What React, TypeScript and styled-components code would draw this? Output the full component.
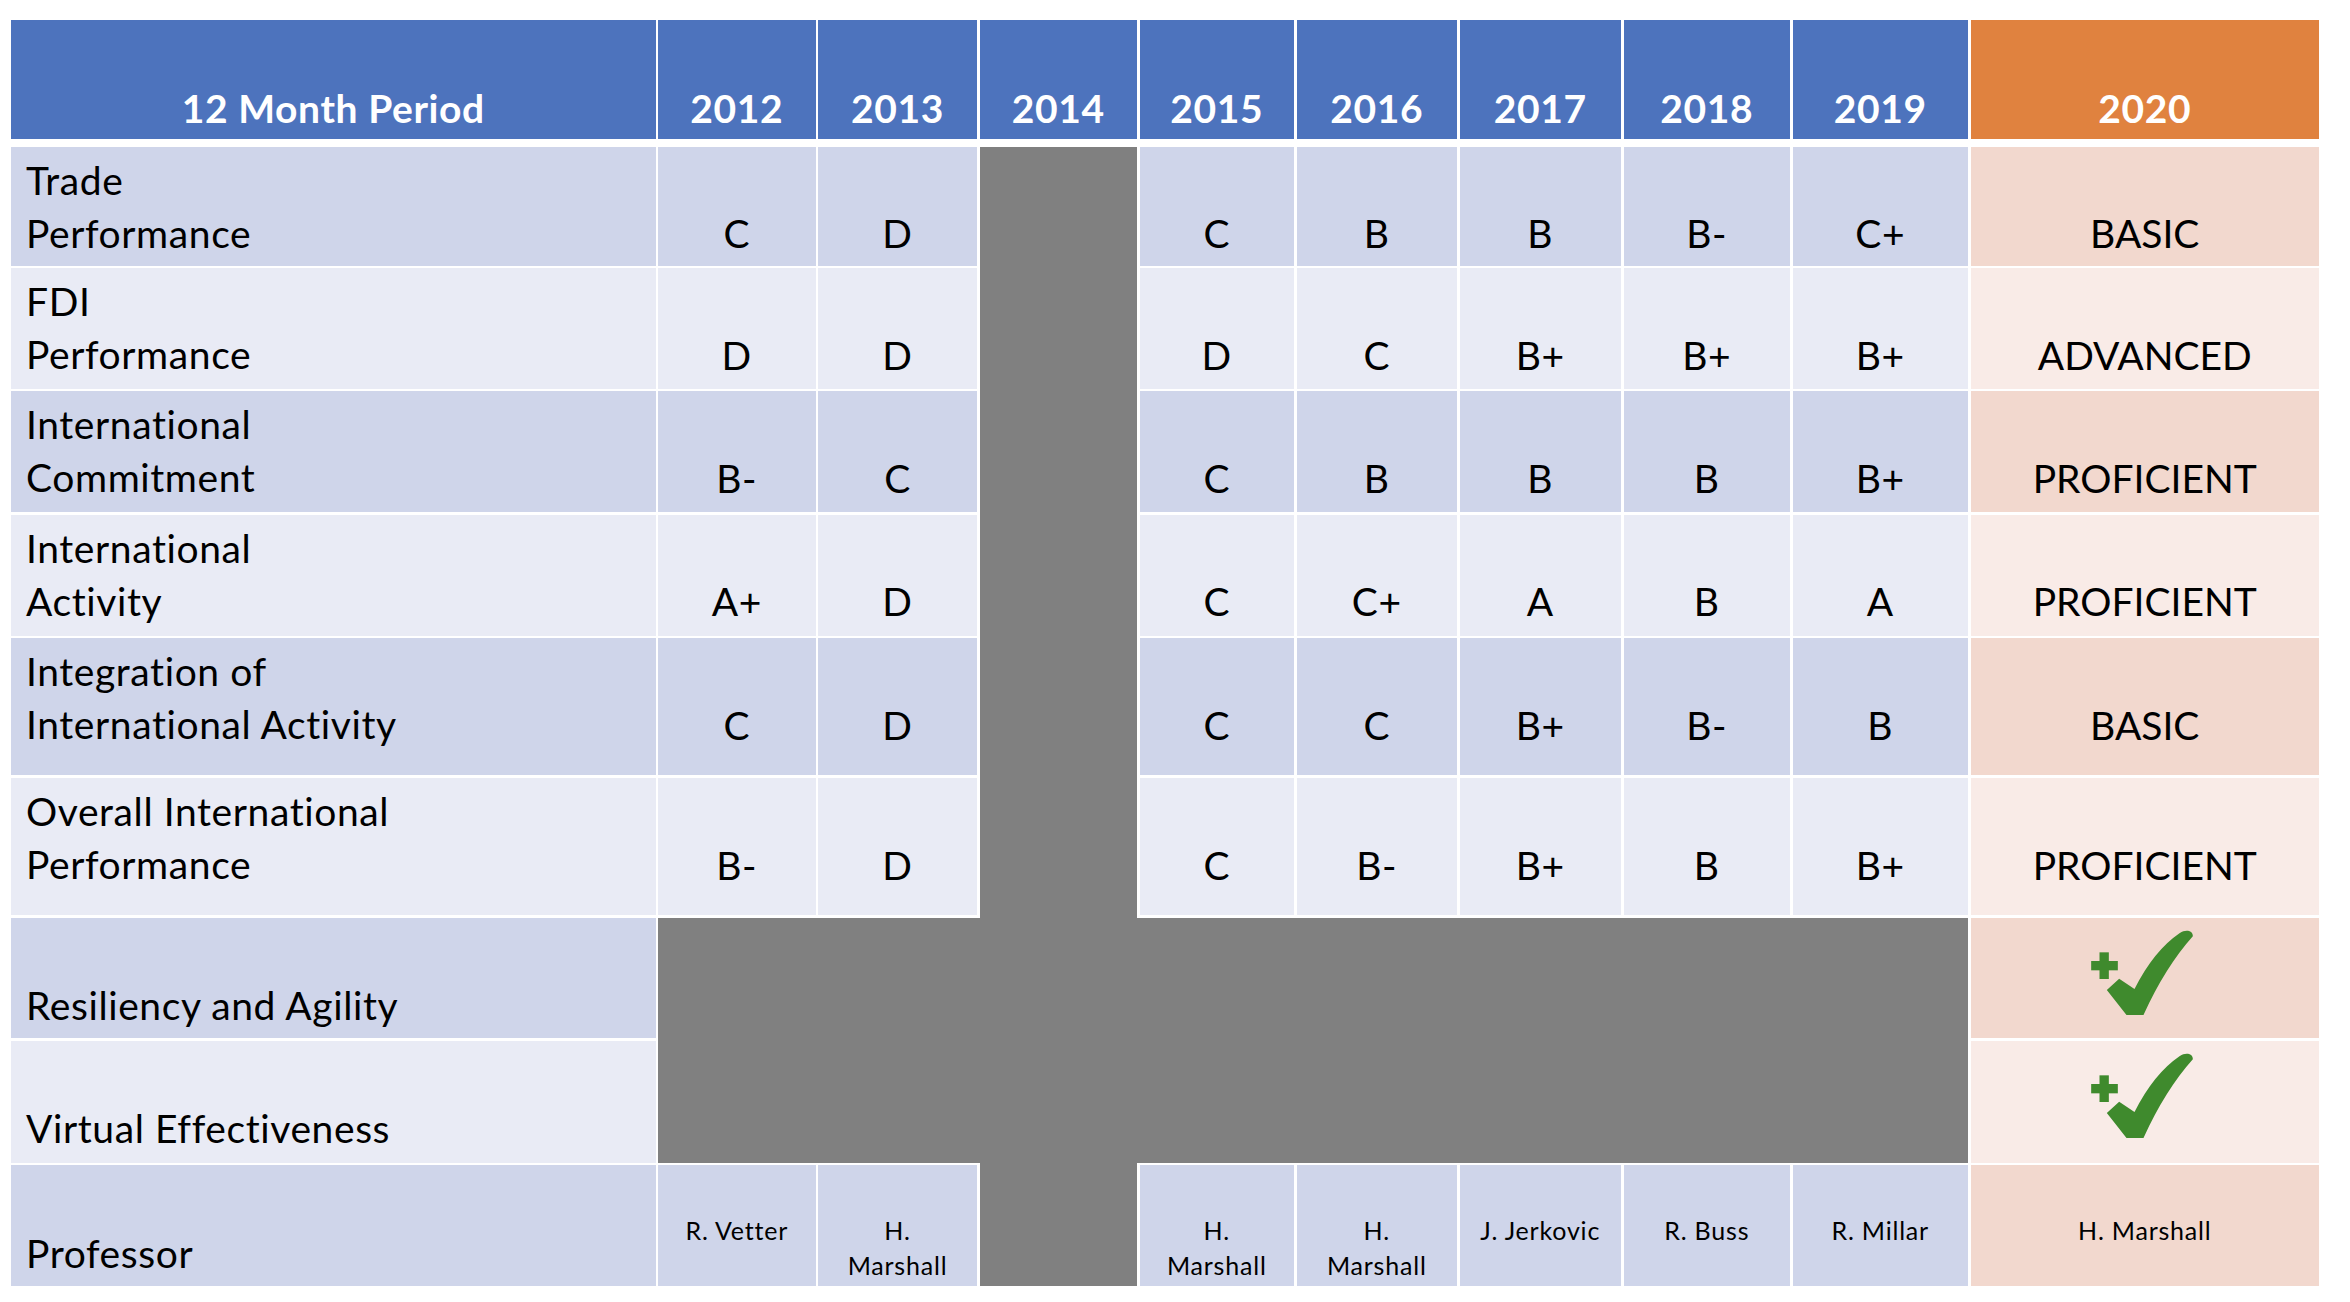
import { Fragment } from "react";
import styled, { createGlobalStyle } from "styled-components";

const GlobalStyle = createGlobalStyle`
  body {
    margin: 0;
    background: #ffffff;
    font-family: Lato, "Liberation Sans", sans-serif;
    color: #000000;
  }
`;

const years = ["2012", "2013", "2014", "2015", "2016", "2017", "2018", "2019"];

// 2014 is left out of every row, that column is blocked
const ratings = [
  {
    label: ["Trade", "Performance"],
    grades: ["C", "D", "C", "B", "B", "B-", "C+"],
    level: "BASIC",
  },
  {
    label: ["FDI", "Performance"],
    grades: ["D", "D", "D", "C", "B+", "B+", "B+"],
    level: "ADVANCED",
  },
  {
    label: ["International", "Commitment"],
    grades: ["B-", "C", "C", "B", "B", "B", "B+"],
    level: "PROFICIENT",
  },
  {
    label: ["International", "Activity"],
    grades: ["A+", "D", "C", "C+", "A", "B", "A"],
    level: "PROFICIENT",
  },
  {
    label: ["Integration of", "International Activity"],
    grades: ["C", "D", "C", "C", "B+", "B-", "B"],
    level: "BASIC",
  },
  {
    label: ["Overall International", "Performance"],
    grades: ["B-", "D", "C", "B-", "B+", "B", "B+"],
    level: "PROFICIENT",
  },
];

const extras = ["Resiliency and Agility", "Virtual Effectiveness"];

const professors = [
  ["R. Vetter"],
  ["H.", "Marshall"],
  ["H.", "Marshall"],
  ["H.", "Marshall"],
  ["J. Jerkovic"],
  ["R. Buss"],
  ["R. Millar"],
];

function PlusCheck() {
  return (
    <CheckSvg viewBox="0 0 305 255" width="102" height="85">
      <rect x="25" y="67" width="28" height="80" fill="#3F8A2D" />
      <rect x="0" y="93" width="80" height="28" fill="#3F8A2D" />
      <path
        d="M47 180 L84 146 L130 177 Q188 62 266 9 C284 -3 306 2 305 19 Q222 112 157 255 L106 255 Z"
        fill="#3F8A2D"
      />
    </CheckSvg>
  );
}

function App() {
  return (
    <>
      <GlobalStyle />
      <Page>
        <HeaderGrid>
          <HeadCell>12 Month Period</HeadCell>
          {years.map((y) => (
            <HeadCell key={y}>{y}</HeadCell>
          ))}
          <HeadCell $accent>2020</HeadCell>
        </HeaderGrid>

        <Body>
          <Blocked $col="4" $row="1 / span 9" />
          <Blocked $col="2 / span 8" $row="7 / span 2" />

          {ratings.map((r, i) => {
            const dark = i % 2 === 0;
            return (
              <Fragment key={r.label.join(" ")}>
                <Label $dark={dark}>
                  {r.label.map((l) => (
                    <div key={l}>{l}</div>
                  ))}
                </Label>
                {r.grades.map((g, j) => (
                  <Grade key={j} $dark={dark}>
                    {g}
                  </Grade>
                ))}
                <Grade $dark={dark} $final>
                  {r.level}
                </Grade>
              </Fragment>
            );
          })}

          {extras.map((t, i) => (
            <Fragment key={t}>
              <Label $dark={i === 0} $single>
                {t}
              </Label>
              <CheckCell $dark={i === 0}>
                <PlusCheck />
              </CheckCell>
            </Fragment>
          ))}

          <Label $dark $single>
            Professor
          </Label>
          {professors.map((p, i) => (
            <Name key={i} $dark>
              {p.map((n) => (
                <div key={n}>{n}</div>
              ))}
            </Name>
          ))}
          <Name $dark $final>
            H. Marshall
          </Name>
        </Body>
      </Page>
    </>
  );
}

export default App;

const columns =
  "644.5px 157.5px 159px 157.5px 154.5px 160.5px 161.5px 166.5px 175.5px 348.5px";

const blueBand = (dark: boolean) => (dark ? "#CFD5EA" : "#E9EBF5");
const orangeBand = (dark: boolean) => (dark ? "#F2D8CE" : "#F9EBE7");

const Page = styled.div`
  width: 2308px;
  padding: 20px 0 0 11px;
`;

const HeaderGrid = styled.div`
  display: grid;
  grid-template-columns: ${columns};
  column-gap: 2.5px;
  height: 119.3px;
  margin-bottom: 7.4px;
`;

const HeadCell = styled.div<{ $accent?: boolean }>`
  background: ${(props) => (props.$accent ? "#E0823F" : "#4D73BD")};
  color: #ffffff;
  font-weight: 700;
  font-size: 39px;
  line-height: 53px;
  letter-spacing: 0.6px;
  text-align: center;
  padding-top: 62px;
  box-sizing: border-box;
  white-space: nowrap;
`;

const Body = styled.div`
  display: grid;
  grid-template-columns: ${columns};
  grid-template-rows: 119px 120.4px 121px 121px 137px 137.3px 120px 122px 121px;
  gap: 2.6px 2.5px;
`;

const Blocked = styled.div<{ $col: string; $row: string }>`
  grid-column: ${(props) => props.$col};
  grid-row: ${(props) => props.$row};
  background: #808080;
`;

const Label = styled.div<{ $dark: boolean; $single?: boolean }>`
  background: ${(props) => blueBand(props.$dark)};
  font-size: 39px;
  line-height: 53px;
  letter-spacing: 0.6px;
  padding: ${(props) => (props.$single ? "61.5px" : "7px")} 0 0 15px;
  box-sizing: border-box;
  white-space: nowrap;
`;

const Grade = styled.div<{ $dark: boolean; $final?: boolean }>`
  background: ${(props) =>
    props.$final ? orangeBand(props.$dark) : blueBand(props.$dark)};
  font-size: 39px;
  line-height: 53px;
  letter-spacing: ${(props) => (props.$final ? "0" : "0.6px")};
  text-align: center;
  padding-top: 60.5px;
  box-sizing: border-box;
  white-space: nowrap;
`;

const CheckCell = styled.div<{ $dark: boolean }>`
  background: ${(props) => orangeBand(props.$dark)};
  display: flex;
  justify-content: center;
  align-items: flex-start;
  padding: 12px 6px 0 0;
  box-sizing: border-box;
`;

const CheckSvg = styled.svg`
  display: block;
`;

const Name = styled.div<{ $dark: boolean; $final?: boolean }>`
  background: ${(props) =>
    props.$final ? orangeBand(props.$dark) : blueBand(props.$dark)};
  font-size: 25px;
  line-height: 35px;
  letter-spacing: 0.8px;
  text-align: center;
  padding-top: 48px;
  box-sizing: border-box;
  white-space: nowrap;
`;
